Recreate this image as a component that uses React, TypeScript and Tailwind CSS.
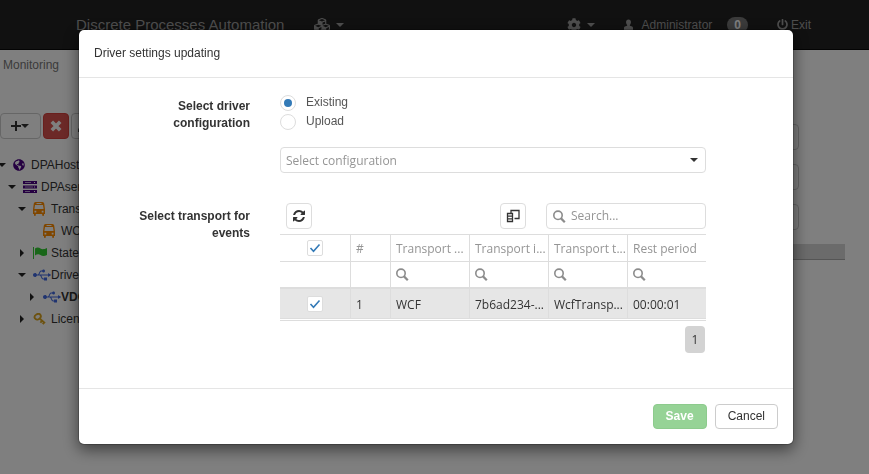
import type { ReactNode } from "react";
import { FaCog, FaCubes, FaGlobeAmericas, FaPen, FaPowerOff, FaUsb } from "react-icons/fa";

function CaretDown() {
  return (
    <svg viewBox="0 0 8 4" className="h-1 w-2 shrink-0" fill="currentColor" aria-hidden="true">
      <path d="M0 0h8L4 4z" />
    </svg>
  );
}

function CaretRight() {
  return (
    <svg viewBox="0 0 4 8" className="ml-0.5 h-2 w-1 shrink-0" fill="currentColor" aria-hidden="true">
      <path d="M0 0v8l4-4z" />
    </svg>
  );
}

function RefreshIcon() {
  return (
    <svg viewBox="0 0 1536 1536" className="size-3" fill="currentColor" aria-hidden="true">
      <path d="M1511 928q0 5-1 7-64 268-268 434.500T764 1536q-146 0-282.500-55T238 1324l-129 129q-19 19-45 19t-45-19-19-45V960q0-26 19-45t45-19h448q26 0 45 19t19 45-19 45l-137 137q71 66 161 102t187 36q134 0 250-65t186-179q11-17 53-117 8-23 30-23h192q13 0 22.500 9.500t9.500 22.500zm25-800v448q0 26-19 45t-45 19h-448q-26 0-45-19t-19-45 19-45l138-138Q969 256 768 256q-134 0-250 65T332 500q-11 17-53 117-8 23-30 23H50q-13 0-22.500-9.500T18 608v-7q65-268 270-434.500T768 0q146 0 284 55.500T1297 212l130-129q19-19 45-19t45 19 19 45z" />
    </svg>
  );
}

function SearchIcon() {
  return (
    <svg viewBox="0 0 13 13" className="size-[13px] shrink-0 text-[#8c8c8c]" fill="none" stroke="currentColor" aria-hidden="true">
      <circle cx="5" cy="5.300" r="4.200" strokeWidth="1.600" />
      <path d="M8 8.400l3.800 3.800" strokeWidth="2.200" />
    </svg>
  );
}

function ColumnChooserIcon() {
  return (
    <svg viewBox="0 0 14 14" className="size-3.5" fill="none" stroke="#333" aria-hidden="true">
      <path d="M5 4.500V1.500h8v8H8.500" strokeWidth="1.300" />
      <path d="M1.500 4.500h5v8h-5zM1.500 7.200h5M1.500 9.800h5" strokeWidth="1.300" />
    </svg>
  );
}

function ServerIcon() {
  return (
    <svg viewBox="0 0 14 12" className="h-3 w-3.5" aria-hidden="true">
      <path d="M0 0h14v3H0zM0 4.500h14v3H0zM0 9h14v3H0z" fill="#4b0082" />
      <path d="M2 1.500h6M2 6h8M2 10.500h5" stroke="#b79fd0" />
      <path d="M11 1.500h1M11 6h1M11 10.500h1" stroke="#fff" />
    </svg>
  );
}

function BusIcon() {
  return (
    <svg viewBox="0 0 12 14" className="h-3.5 w-3" fill="#ff8c00" fillRule="evenodd" aria-hidden="true">
      <path d="M2.500 0h7q1.500 0 1.700 1.500L12 7.500V12h-1v1.200q0 .8-.9.800t-.9-.800V12H2.800v1.200q0 .8-.9.800T1 13.200V12H0V7.500L.8 1.500Q1 0 2.500 0zM3.500 1v1h5V1zM2 3L1.400 7h9.200L10 3zM1.500 8.800v1.700h1.800V8.800zM8.700 8.800v1.700h1.800V8.800z" />
    </svg>
  );
}

function FlagIcon() {
  return (
    <svg viewBox="0 0 14 12" className="h-3 w-3.5" fill="#32cd32" aria-hidden="true">
      <path d="M0 0h1v12H0z" />
      <path d="M2 1.500c2-1.500 4-1 5.500 0s3.500 1 6.500-.5v7c-3 1.500-5 1-6.500 0S4 7 2 8.500z" />
    </svg>
  );
}

function KeyIcon() {
  return (
    <svg viewBox="0 0 14 13" className="h-3 w-3.5" fill="none" stroke="#daa520" strokeWidth="2" aria-hidden="true">
      <ellipse cx="4.500" cy="4" rx="3.500" ry="2.800" transform="rotate(-30 4.500 4)" />
      <path d="M6.500 6l6 5M9 8.500L7.500 10.500M11.500 10l-1.500 2" />
    </svg>
  );
}

function UserIcon() {
  return (
    <svg viewBox="0 0 10 12" className="h-3 w-[9px]" fill="currentColor" aria-hidden="true">
      <path d="M5 0c1.700 0 2.700 1.200 2.700 2.800 0 1.400-.6 2.600-1.200 3.200v.8l2.500 1q1 .5 1 1.500V11.500H0V9.300q0-1 1-1.500l2.500-1V6C2.900 5.400 2.300 4.200 2.300 2.800 2.300 1.200 3.300 0 5 0z" />
    </svg>
  );
}

function CrossIcon() {
  return (
    <svg viewBox="0 0 12 12" className="size-3" stroke="currentColor" strokeWidth="3.600" aria-hidden="true">
      <path d="M1.800 1.800l8.400 8.400M10.200 1.800l-8.400 8.400" />
    </svg>
  );
}

function PlusIcon() {
  return (
    <svg viewBox="0 0 10 10" className="size-2.5" stroke="currentColor" strokeWidth="2" aria-hidden="true">
      <path d="M5 0v10M0 5h10" />
    </svg>
  );
}

function Check({ label }: { label: string }) {
  return (
    <span className="relative mx-auto block size-4">
      <input
        type="checkbox"
        defaultChecked
        aria-label={label}
        className="block size-4 appearance-none rounded-xs border border-[#ddd] bg-white"
      />
      <svg viewBox="0 0 16 16" className="pointer-events-none absolute inset-0" fill="none" stroke="#337ab7" strokeWidth="1.600" aria-hidden="true">
        <path d="M3.500 8l3 3.200L12.500 4.500" />
      </svg>
    </span>
  );
}

type Node = { pad: string; open?: boolean; icon: ReactNode; text: string; bold?: boolean };

const usb = <FaUsb className="size-[18px] shrink-0 text-[#4169e1]" />;

const nodes: Node[] = [
  { pad: "pl-0", open: true, icon: <FaGlobeAmericas className="size-3 text-[#4b0082]" />, text: "DPAHost" },
  { pad: "pl-2.5", open: true, icon: <ServerIcon />, text: "DPAserver" },
  { pad: "pl-5", open: true, icon: <BusIcon />, text: "Transports" },
  { pad: "pl-[30px]", icon: <BusIcon />, text: "WCF" },
  { pad: "pl-5", open: false, icon: <FlagIcon />, text: "States" },
  { pad: "pl-5", open: true, icon: usb, text: "Drivers" },
  { pad: "pl-[30px]", open: false, icon: usb, text: "VDC", bold: true },
  { pad: "pl-5", open: false, icon: <KeyIcon />, text: "Licenses" },
];

function Tree() {
  return (
    <ul className="mt-[15px] -ml-0.5 text-[#333]">
      {nodes.map((n) => (
        <li key={n.text} className={`flex h-[22px] items-center ${n.pad}`}>
          <span className="flex w-[15px] shrink-0 text-[#222]">
            {n.open === true && <CaretDown />}
            {n.open === false && <CaretRight />}
          </span>
          <span className="flex w-[18px] shrink-0 items-center">{n.icon}</span>
          <span className={n.bold ? "font-bold" : ""}>{n.text}</span>
        </li>
      ))}
    </ul>
  );
}

const columns = ["Transport ...", "Transport i...", "Transport t...", "Rest period"];
const record = ["WCF", "7b6ad234-...", "WcfTransp...", "00:00:01"];
const cell = "whitespace-nowrap border-l border-[#ddd] pl-[5px]";
const square = "flex size-[26px] items-center justify-center rounded border border-[#ddd] bg-white text-[#333]";

function TransportTable() {
  return (
    <table className="mt-[5px] w-full table-fixed border-separate border-spacing-0 border-b border-[#ddd] pb-px text-left text-[#333]">
      <colgroup>
        <col className="w-[70px]" />
        <col className="w-10" />
        <col />
        <col />
        <col />
        <col />
      </colgroup>
      <thead className="text-[#959595]">
        <tr className="h-[27px]">
          <th className="border-t border-[#ddd] p-0"><Check label="Select all" /></th>
          <th className={`${cell} border-t pt-0.5 font-normal`}>#</th>
          {columns.map((c) => (
            <th key={c} className={`${cell} border-t pt-0.5 font-normal`}>{c}</th>
          ))}
        </tr>
        <tr className="h-7">
          <td className="border-t border-b-2 border-[#ddd]" />
          <td className={`${cell} border-t border-b-2`} />
          {columns.map((c) => (
            <td key={c} className={`${cell} border-t border-b-2`}><SearchIcon /></td>
          ))}
        </tr>
      </thead>
      <tbody>
        <tr className="h-[30px] bg-[#e6e6e6]">
          <td className="border-b border-[#ddd] p-0"><Check label="Select row 1" /></td>
          <td className={`${cell} border-b pt-0.5`}>1</td>
          {record.map((r) => (
            <td key={r} className={`${cell} border-b pt-0.5`}>{r}</td>
          ))}
        </tr>
      </tbody>
    </table>
  );
}

function Radio({ label, checked }: { label: string; checked?: boolean }) {
  return (
    <label className="flex h-[19px] items-center gap-2.5 text-[#555]">
      <span className="grid size-4 place-items-center">
        <input
          type="radio"
          name="source"
          defaultChecked={checked}
          className="peer col-start-1 row-start-1 size-4 appearance-none rounded-full border border-[#ddd] bg-white"
        />
        <span className="col-start-1 row-start-1 size-2 rounded-full bg-[#337ab7] opacity-0 peer-checked:opacity-100" />
      </span>
      <span className="pb-0.5">{label}</span>
    </label>
  );
}

function Dialog() {
  return (
    <div role="dialog" aria-labelledby="dialog-title" className="rounded-md border border-black/20 bg-white bg-clip-padding text-[#333] shadow-[0_5px_15px_rgba(0,0,0,0.5)]">
      <header className="border-b border-[#e5e5e5] px-[15px] py-[15px]">
        <h1 id="dialog-title" className="leading-[17px]">Driver settings updating</h1>
      </header>
      <div className="grid grid-cols-[156px_1fr] gap-x-[30px] pt-[15px] pr-[87px] pb-[35px] pl-[15px]">
        <p id="source-label" className="pt-[5px] pl-10 text-right leading-[17px] font-bold">Select driver configuration</p>
        <div>
          <div role="radiogroup" aria-labelledby="source-label">
            <Radio label="Existing" checked />
            <Radio label="Upload" />
          </div>
          <div className="relative mt-4 font-['Open_Sans',sans-serif]">
            <select aria-label="Configuration" className="h-[26px] w-full appearance-none rounded border border-[#ddd] bg-white pt-0.5 pl-[5px] text-[#959595]">
              <option>Select configuration</option>
            </select>
            <span className="pointer-events-none absolute top-[11px] right-2"><CaretDown /></span>
          </div>
        </div>
        <p className="mt-[30px] pt-[5px] pl-3 text-right leading-[17px] font-bold">Select transport for events</p>
        <div className="mt-[30px] min-w-0 font-['Open_Sans',sans-serif]">
          <div className="flex items-center pl-1.5">
            <button type="button" aria-label="Refresh" className={square}><RefreshIcon /></button>
            <button type="button" aria-label="Column chooser" className={`ml-auto ${square}`}><ColumnChooserIcon /></button>
            <label className="ml-5 flex h-[26px] w-40 items-center gap-[5px] rounded border border-[#ddd] px-1.5">
              <SearchIcon />
              <input type="search" aria-label="Search" placeholder="Search..." className="w-full min-w-0 bg-transparent outline-none placeholder:text-[#959595]" />
            </label>
          </div>
          <TransportTable />
          <nav aria-label="Pages" className="mt-[5px] flex justify-end pr-px">
            <button type="button" className="h-[27px] w-5 rounded-sm bg-[#d3d3d3] text-[#333]">1</button>
          </nav>
        </div>
      </div>
      <footer className="flex justify-end gap-2 border-t border-[#e5e5e5] p-[15px]">
        <button type="button" className="h-[25px] rounded-sm border border-[#8dcb8d] bg-[#96d396] px-3 pb-0.5 font-bold text-white">Save</button>
        <button type="button" className="h-[25px] rounded-sm border border-[#ccc] bg-white px-3 pb-0.5">Cancel</button>
      </footer>
    </div>
  );
}

export default function App() {
  return (
    <div className="h-screen overflow-hidden bg-white font-['Liberation_Sans',Arial,sans-serif] text-xs">
      <nav className="flex h-[50px] items-center border-b border-[#080808] bg-[#222] pr-[58px] pl-[76px] text-[#9d9d9d]">
        <span className="text-[15px]">Discrete Processes Automation</span>
        <button type="button" aria-label="Modules" className="ml-[30px] flex items-center gap-1.5">
          <FaCubes className="size-4" />
          <CaretDown />
        </button>
        <button type="button" aria-label="Settings" className="ml-auto flex items-center gap-1.5">
          <FaCog className="size-3.5" />
          <CaretDown />
        </button>
        <a href="#user" className="ml-[29px] flex items-center gap-[9px]">
          <UserIcon />
          Administrator
        </a>
        <span className="ml-[15px] rounded-full bg-[#777] px-[7px] py-px leading-[14px] font-bold text-white">0</span>
        <a href="#exit" className="ml-[29px] flex items-center gap-[3px]">
          <FaPowerOff className="size-[11px]" />
          Exit
        </a>
      </nav>
      <main className="flex">
        <aside className="w-60">
          <a href="#monitoring" className="block pt-1.5 pl-[3px] leading-[18px] text-[#777]">Monitoring</a>
          <div className="mt-[39px] flex gap-0.5">
            <button type="button" aria-label="Add" className="flex h-[26px] w-[41px] items-center justify-center rounded border border-[#ccc] pr-0.5 text-[#333]">
              <PlusIcon />
              <CaretDown />
            </button>
            <button type="button" aria-label="Delete" className="flex size-[26px] items-center justify-center rounded border border-[#d43f3a] bg-[#d9534f] text-white">
              <CrossIcon />
            </button>
            <button type="button" aria-label="Edit" className="flex size-[26px] items-center justify-center rounded border border-[#ccc] text-[#333]">
              <FaPen className="size-3" />
            </button>
          </div>
          <Tree />
        </aside>
        <section className="flex-1 pt-[74px] pr-6">
          <div className="flex flex-col gap-3.5 pr-[46px]">
            <input aria-label="Name" className="h-[26px] rounded border border-[#ccc]" />
            <input aria-label="Address" className="h-[26px] rounded border border-[#ccc]" />
            <input aria-label="Port" className="h-[26px] rounded border border-[#ccc]" />
          </div>
          <div className="mt-3.5 h-4 border-b border-[#aaa] bg-[#d6d6d6]" />
        </section>
      </main>
      <div className="fixed inset-0 bg-black/50 pt-[29px] pr-[75px] pl-[78px]">
        <Dialog />
      </div>
    </div>
  );
}
